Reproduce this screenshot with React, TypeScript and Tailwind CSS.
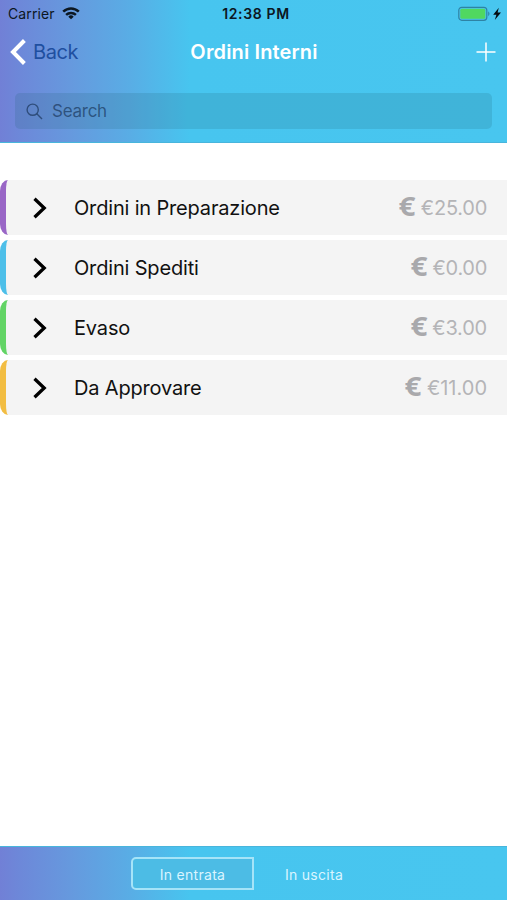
import React from "react";

const gradient =
  "bg-[linear-gradient(90deg,#7180d6_0px,#6d88d9_20px,#6699de_70px,#59ade5_130px,#47c5ef_190px,#48c6ef_100%)]";

type Order = { name: string; amount: string; border: string; spacing: string };

const orders: Order[] = [
  { name: "Ordini in Preparazione", amount: "€25.00", border: "border-l-[#9966c6]", spacing: "tracking-[-0.25px]" },
  { name: "Ordini Spediti", amount: "€0.00", border: "border-l-[#4dbfe9]", spacing: "tracking-[-0.3px]" },
  { name: "Evaso", amount: "€3.00", border: "border-l-[#62d465]", spacing: "tracking-[-0.2px]" },
  { name: "Da Approvare", amount: "€11.00", border: "border-l-[#f2bd42]", spacing: "tracking-[0px]" },
];

function WifiIcon() {
  return (
    <svg width="18" height="13" viewBox="0 0 18 13" fill="none" stroke="#0c1722" strokeWidth="2.5">
      <path d="M1.2 4.7C5.7.4 12.3.4 16.8 4.7" />
      <path d="M4.1 7.9c2.8-2.6 7-2.6 9.8 0" />
      <path d="M9 12.3 6.3 9.7a3.8 3.8 0 0 1 5.4 0Z" fill="#0c1722" stroke="none" />
    </svg>
  );
}

function Battery() {
  return (
    <svg width="44" height="16" viewBox="0 0 44 16">
      <rect x=".8" y="1.3" width="28" height="13" rx="3" fill="none" stroke="#2e83a5" strokeWidth="1.2" />
      <rect x="2.3" y="2.8" width="25" height="10" rx="1.5" fill="#50d860" />
      <path d="M30.2 5.3q2.6 2.5 0 5Z" fill="#2e83a5" />
      <path d="m40.8 1.8-5.6 7h3.2l-1.6 5.2 6.2-7.4h-3.4Z" fill="#050d12" />
    </svg>
  );
}

function StatusBar() {
  return (
    <div className="grid h-[27px] grid-cols-[1fr_auto_1fr] items-center pl-[8px] pr-[3px] text-[#0c1722]">
      <div className="flex items-center gap-[7px]">
        <span className="text-[14px] tracking-[0.12px]">Carrier</span>
        <WifiIcon />
      </div>
      <span className="text-[14px] font-semibold tracking-[0.65px]">12:38 PM</span>
      <div className="flex justify-end pr-[2px]">
        <Battery />
      </div>
    </div>
  );
}

function NavBar() {
  return (
    <div className="grid h-[50px] grid-cols-[1fr_auto_1fr] items-center pl-[11px] pr-[10px]">
      <div className="flex items-center gap-[7px] text-[#1f4fa0]">
        <svg className="-ml-px" width="16" height="26" viewBox="0 0 16 26" fill="none" stroke="white" strokeWidth="4">
          <path d="M14.4 1.5 3 13l11.4 11.5" />
        </svg>
        <span className="text-[20px] tracking-[-0.45px]">Back</span>
      </div>
      <h1 className="text-[20px] font-semibold tracking-[0.15px] text-white">Ordini Interni</h1>
      <div className="flex justify-end pr-px">
        <svg width="20" height="20" viewBox="0 0 20 20" fill="none" stroke="white" strokeWidth="1.5">
          <path d="M10 .5v19M.5 10h19" />
        </svg>
      </div>
    </div>
  );
}

function SearchField() {
  return (
    <div className="mx-[15px] mt-4 flex h-9 items-center gap-[9px] rounded-[5px] bg-[#1b5f72]/17 pl-[11px] text-[#102a4a]/60">
      <svg width="17" height="17" viewBox="0 0 17 17" fill="none" stroke="currentColor" strokeWidth="1.4">
        <circle cx="6.7" cy="6.7" r="5.6" />
        <path d="m10.8 10.8 5.2 5.2" />
      </svg>
      <span className="pt-[2px] text-[17px] tracking-[-0.25px]">Search</span>
    </div>
  );
}

function OrderRow({ name, amount, border, spacing }: Order) {
  return (
    <li
      className={`flex h-[55px] items-center rounded-l-[8px_11px] border-l-[6px] bg-[#f4f4f4] pl-[27px] pr-[20px] ${border}`}
    >
      <svg width="14" height="22" viewBox="0 0 14 22" fill="none" stroke="black" strokeWidth="3.3">
        <path d="m1.5 1.8 9.7 9.2-9.7 9.2" />
      </svg>
      <span className="ml-[27px] pt-px text-[20px] tracking-[-0.17px] text-[#111]">{name}</span>
      <span className="ml-auto flex items-center pt-px text-[#b4b4b7]">
        <span className="mr-[5px] -mt-[5px] origin-right scale-x-110 font-['Open_Sans',sans-serif] text-[27px] leading-none font-bold text-[#a9a9ac]">€</span>
        <span className={`text-[20px] font-normal ${spacing}`}>{amount}</span>
      </span>
    </li>
  );
}

export default function App() {
  return (
    <div className="flex h-[900px] w-[507px] flex-col overflow-hidden bg-white font-['Inter','Liberation_Sans',sans-serif] whitespace-nowrap">
      <header className={`h-[143px] shrink-0 border-b border-[#48b5dc] ${gradient}`}>
        <StatusBar />
        <NavBar />
        <SearchField />
      </header>
      <main className="flex-1 pt-[37px]">
        <ul className="flex flex-col gap-[5px]">
          {orders.map((order) => (
            <OrderRow key={order.name} {...order} />
          ))}
        </ul>
      </main>
      <footer className={`flex h-[54px] shrink-0 border-t border-[#48b5dc] pt-[10px] pl-[131px] text-[14px] tracking-[0.28px] text-[#daf5ff] ${gradient}`}>
        <button className="flex h-[33px] w-[123px] items-center justify-center rounded-l-[5px] border-2 border-[#a5e4f8] bg-[#4cbce5] pt-px">
          In entrata
        </button>
        <button className="flex h-[33px] w-[120px] items-center justify-center pt-px">In uscita</button>
      </footer>
    </div>
  );
}
